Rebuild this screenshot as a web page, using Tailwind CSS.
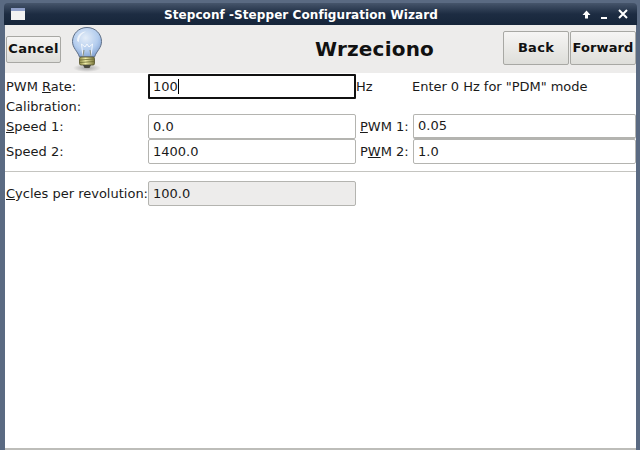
<!DOCTYPE html>
<html lang="en">
<head>
  <meta charset="UTF-8">
  <title>Stepconf</title>
  <script src="https://cdn.jsdelivr.net/npm/@tailwindcss/browser@4"></script>
</head>
<body class="w-[640px] h-[450px] overflow-hidden bg-[#5a6a82] font-['DejaVu_Sans',sans-serif] text-[13px] leading-[16px] text-[#1a1a1a]">
  <div class="h-[450px] pt-[3px] pl-[5px] pr-[4px] flex flex-col">
    <!-- title bar -->
    <div class="h-[22px] bg-gradient-to-b from-[#46556b] via-[#1d2c42] via-50% to-[#16253a] rounded-t-[4px] -ml-[1px] -mr-[1px] pl-[7px] pr-[9px] flex items-center relative shrink-0">
      <div class="w-[14px] h-[12px] bg-[#f2f2f2] border-t-[3px] border-[#8f9fc8]"></div>
      <div class="absolute left-[160px] top-[4px] text-white font-bold text-[12px] leading-[16px] tracking-[0.07px] whitespace-nowrap">Stepconf -Stepper Configuration Wizard</div>
      <div class="ml-auto flex items-center relative">
        <svg class="mr-[10px]" width="9" height="10" viewBox="0 0 9 10"><path d="M4.5 1.5 L8.5 6 L6 6 L6 9.5 L3 9.5 L3 6 L0.5 6 Z" fill="#fff"/></svg>
        <svg class="mr-[10px]" width="7" height="10" viewBox="0 0 7 10"><rect x="0" y="8" width="6" height="2" fill="#fff"/></svg>
        <svg width="10" height="10" viewBox="0 0 10 10"><path d="M1 1 L9 9 M9 1 L1 9" stroke="#fff" stroke-width="2"/></svg>
      </div>
    </div>

    <div class="flex-1 bg-white flex flex-col">
      <!-- header -->
      <div class="h-[48px] bg-[#edeceb] flex items-center pl-[1px] relative shrink-0">
        <button class="w-[55px] h-[27px] rounded-[2px] border border-[#a8a8a4] bg-gradient-to-b from-[#f6f5f4] to-[#dededa] font-bold tracking-[0.3px] text-[#111]">Cancel</button>
        <svg class="ml-[10px]" width="32" height="46" viewBox="0 0 32 46">
          <defs>
            <radialGradient id="glass" cx="0.45" cy="0.35" r="0.7">
              <stop offset="0" stop-color="#e4edf8"/>
              <stop offset="0.6" stop-color="#b4cdee"/>
              <stop offset="1" stop-color="#7f9fd0"/>
            </radialGradient>
            <linearGradient id="base" x1="0" y1="0" x2="1" y2="0">
              <stop offset="0" stop-color="#8d8a45"/>
              <stop offset="0.4" stop-color="#f0eda8"/>
              <stop offset="1" stop-color="#77743a"/>
            </linearGradient>
            <radialGradient id="shade">
              <stop offset="0" stop-color="#777" stop-opacity="0.6"/>
              <stop offset="1" stop-color="#777" stop-opacity="0"/>
            </radialGradient>
          </defs>
          <ellipse cx="16" cy="42" rx="14" ry="4" fill="url(#shade)"/>
          <path d="M16 1.5 C7.5 1.5 1.5 8 1.5 15.5 C1.5 22 6.5 25 8.5 31 L23.5 31 C25.5 25 30.5 22 30.5 15.5 C30.5 8 24.5 1.5 16 1.5 Z" fill="url(#glass)" stroke="#5f6f86" stroke-width="1"/>
          <path d="M6 15 C6 9 10 6 15 5.5 C10 8 8 11 8 16 Z" fill="#fff" fill-opacity="0.7"/>
          <path d="M12 30 L10.5 18 L14 21 L16 18 L18 21 L21.5 18 L20 30" fill="none" stroke="#fff" stroke-opacity="0.8" stroke-width="1"/>
          <path d="M12 30 L13 24 M20 30 L19 24" stroke="#8b8f7c" stroke-width="1"/>
          <rect x="8.5" y="31" width="15" height="8" rx="1.5" fill="url(#base)" stroke="#54522a" stroke-width="0.8"/>
          <path d="M9 34 L23 33 M9 36.5 L23 35.5" stroke="#6b6a32" stroke-width="0.8"/>
          <path d="M12 39 L20 39 L18.5 42 L13.5 42 Z" fill="#4a4a40"/>
        </svg>
        <div class="absolute left-[310px] top-[12px] font-bold text-[20px] leading-[24px] tracking-[0.2px] text-[#111]">Wrzeciono</div>
        <div class="ml-auto flex gap-[1px] self-start mt-[6px]">
          <button class="w-[66px] h-[34px] rounded-[2px] border border-[#a8a8a4] bg-gradient-to-b from-[#f6f5f4] to-[#dededa] font-bold tracking-[0.3px] text-[#111]">Back</button>
          <button class="w-[66px] h-[34px] rounded-[2px] border border-[#a8a8a4] bg-gradient-to-b from-[#f6f5f4] to-[#dededa] font-bold tracking-[0.1px] text-[#111]">Forward</button>
        </div>
      </div>

      <!-- form -->
      <div class="pt-[1px] pl-[1px] flex flex-col">
        <div class="flex items-center h-[25px]">
          <span class="w-[142px]">PWM <u>R</u>ate:</span>
          <div class="w-[208px] h-[25px] border-2 border-[#111] rounded-[1px] pl-[3px] flex items-center">100<span class="w-[1px] h-[15px] bg-black"></span></div>
          <span class="w-[56px]">Hz</span>
          <span class="tracking-[-0.03px]">Enter 0 Hz for "PDM" mode</span>
        </div>
        <div class="h-[15px] flex items-center">Calibration:</div>
        <div class="flex items-center h-[25px]">
          <span class="w-[142px]"><u>S</u>peed 1:</span>
          <div class="w-[208px] h-[25px] border border-[#b4b4b0] rounded-[2px] pl-[4px] flex items-center">0.0</div>
          <span class="w-[57px] pl-[4px]"><u>P</u>WM 1:</span>
          <div class="w-[223px] h-[25px] border border-[#b4b4b0] border-b-2 rounded-[2px] pl-[4px] flex items-center">0.05</div>
        </div>
        <div class="flex items-center h-[25px]">
          <span class="w-[142px]">Speed 2:</span>
          <div class="w-[208px] h-[25px] border border-[#b4b4b0] rounded-[2px] pl-[4px] flex items-center">1400.0</div>
          <span class="w-[57px] pl-[4px]">P<u>W</u>M 2:</span>
          <div class="w-[223px] h-[25px] border border-[#b4b4b0] rounded-[2px] pl-[4px] flex items-center">1.0</div>
        </div>
        <div class="h-px bg-[#c4c4c0] mt-[7px] mb-[9px] -ml-[1px]"></div>
        <div class="flex items-center h-[25px]">
          <span class="w-[142px] whitespace-nowrap"><u>C</u>ycles per revolution:</span>
          <div class="w-[208px] h-[25px] border border-[#b4b4b0] bg-[#edeceb] rounded-[2px] pl-[4px] flex items-center">100.0</div>
        </div>
      </div>

      <div class="mt-auto h-[2px] bg-[#bdbdb9] shrink-0"></div>
    </div>
  </div>
</body>
</html>
